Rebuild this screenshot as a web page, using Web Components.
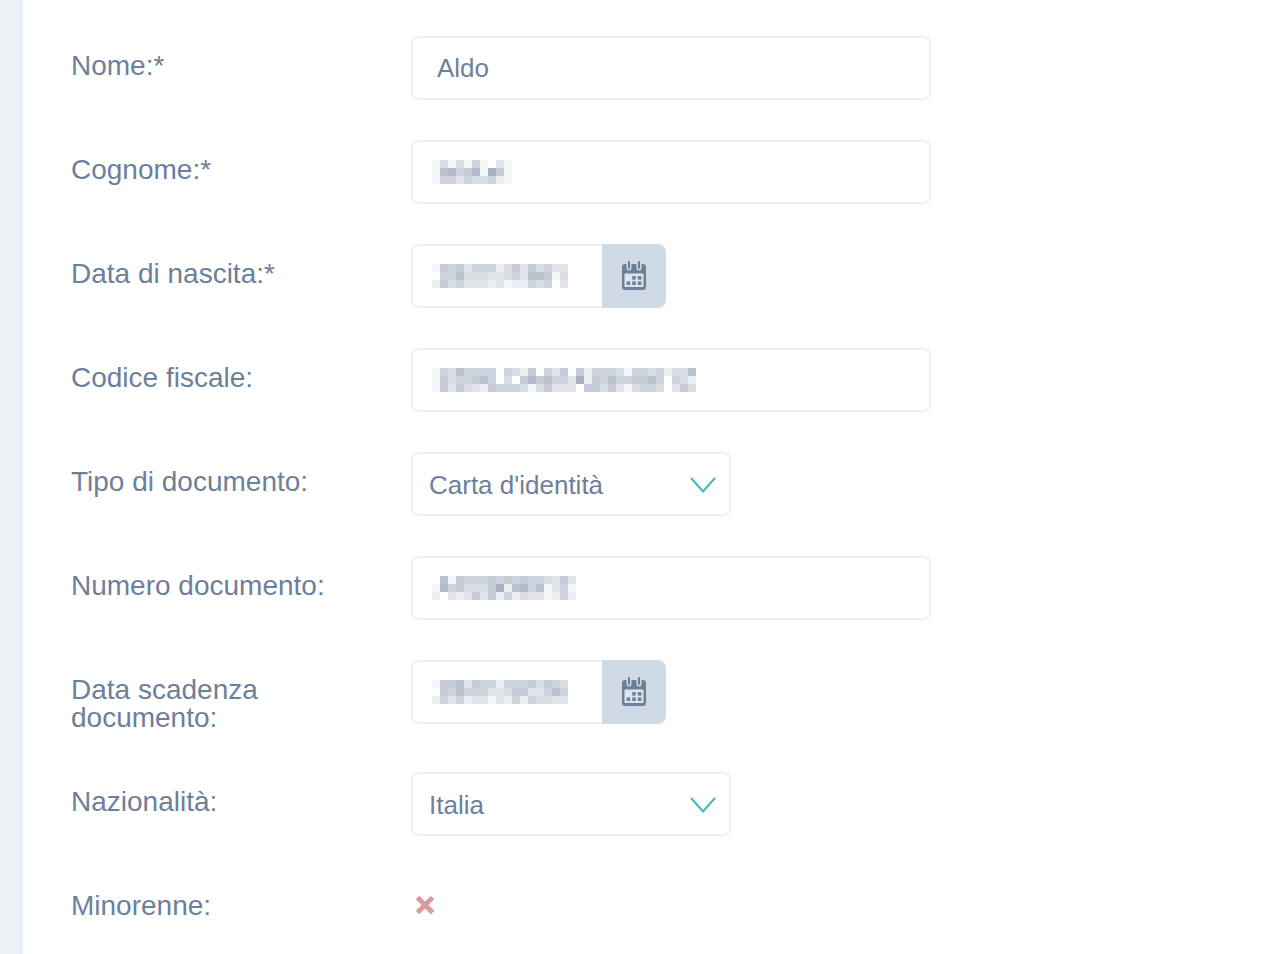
<!DOCTYPE html>
<html lang="it">
<head>
<meta charset="utf-8">
<title>Dati anagrafici</title>
<style>
  html, body { margin: 0; height: 100%; background: #fff; overflow: hidden; }
  body { font-family: "Liberation Sans", Arial, sans-serif; color: #6e7f99; }
</style>
</head>
<body>
<profile-page>
  <form-row label="Nome:*"><text-field>Aldo</text-field></form-row>
  <form-row label="Cognome:*">
    <text-field><blur-text cols="10" rows="1414151031,1785681961,1553544521"></blur-text></text-field>
  </form-row>
  <form-row label="Data di nascita:*">
    <date-field><blur-text cols="17" rows="16563555246364533,05574443345377614,26453332312254503"></blur-text></date-field>
  </form-row>
  <form-row label="Codice fiscale:">
    <text-field><blur-text cols="33" rows="154755550542605360625554155452447,164556750406867553926575566750542,163643265554146333066463145540364"></blur-text></text-field>
  </form-row>
  <form-row label="Tipo di documento:"><select-field>Carta d'identità</select-field></form-row>
  <form-row label="Numero documento:">
    <text-field><blur-text cols="18" rows="071655565656554363,185644469278571351,203236362524331252"></blur-text></text-field>
  </form-row>
  <form-row label="Data scadenza documento:">
    <date-field><blur-text cols="17" rows="16673655255564654,06575553346633575,25352331325254433"></blur-text></date-field>
  </form-row>
  <form-row label="Nazionalità:"><select-field>Italia</select-field></form-row>
  <form-row label="Minorenne:"><no-mark></no-mark></form-row>
</profile-page>

<script>
class ProfilePage extends HTMLElement {
  constructor() {
    super();
    this.attachShadow({ mode: "open" });
    this.shadowRoot.innerHTML = `
      <style>
        :host { display: flex; height: 100vh; }
        .strip { width: 18px; background: #edf2f7; border-right: 5px solid #ebf1f7; flex: none; }
        .content {
          flex: 1;
          padding: 36px 0 0 48px;
          display: flex;
          flex-direction: column;
          gap: 40px;
        }
      </style>
      <div class="strip"></div>
      <div class="content"><slot></slot></div>
    `;
  }
}

class FormRow extends HTMLElement {
  constructor() {
    super();
    this.attachShadow({ mode: "open" });
  }

  connectedCallback() {
    this.render();
  }

  render() {
    const label = this.getAttribute("label") || "";
    this.shadowRoot.innerHTML = `
      <style>
        :host { display: flex; align-items: flex-start; }
        .label {
          width: 300px;
          margin-right: 40px;
          padding-top: 16px;
          font-size: 28px;
          line-height: 28px;
          color: #6e7f99;
          flex: none;
        }
      </style>
      <div class="label">${label}</div>
      <slot></slot>
    `;
  }
}

// Shared box look for the three field types
const fieldStyles = `
  .box {
    box-sizing: border-box;
    height: 64px;
    background: #fff;
    border: 2px solid #e9f1f4;
    border-radius: 8px;
    display: flex;
    align-items: center;
    font-size: 26px;
    color: #6e7f99;
  }
`;

class TextField extends HTMLElement {
  constructor() {
    super();
    this.attachShadow({ mode: "open" });
    this.shadowRoot.innerHTML = `
      <style>
        :host { display: block; }
        ${fieldStyles}
        .box { width: 520px; padding-left: 24px; }
        ::slotted(blur-text) { margin-left: -5px; }
      </style>
      <div class="box"><slot></slot></div>
    `;
  }
}

class DateField extends HTMLElement {
  constructor() {
    super();
    this.attachShadow({ mode: "open" });
    this.shadowRoot.innerHTML = `
      <style>
        :host { display: flex; }
        ${fieldStyles}
        .box {
          width: 191px;
          padding-left: 19px;
          border-right: 0;
          border-radius: 8px 0 0 8px;
        }
        .addon {
          width: 64px;
          height: 64px;
          background: #cfdae5;
          border-radius: 0 8px 8px 0;
          display: flex;
          align-items: center;
          justify-content: center;
        }
        svg { display: block; }
      </style>
      <div class="box"><slot></slot></div>
      <div class="addon">
        <svg width="26" height="30" viewBox="0 0 26 30">
          <rect x="1" y="3" width="24" height="26" rx="3" fill="#6e7f99"/>
          <rect x="3.5" y="12.5" width="19" height="13.5" rx="1" fill="#dfe5ec"/>
          <rect x="5.5" y="0" width="5" height="9.5" rx="2.5" fill="#cfdae5"/>
          <rect x="15.5" y="0" width="5" height="9.5" rx="2.5" fill="#cfdae5"/>
          <rect x="7" y="0" width="2" height="8" rx="1" fill="#6e7f99"/>
          <rect x="17" y="0" width="2" height="8" rx="1" fill="#6e7f99"/>
          <g fill="#6e7f99">
            <rect x="11.2" y="15" width="3.6" height="3.6"/>
            <rect x="16.8" y="15" width="3.6" height="3.6"/>
            <rect x="5.6" y="20.4" width="3.6" height="3.6"/>
            <rect x="11.2" y="20.4" width="3.6" height="3.6"/>
            <rect x="16.8" y="20.4" width="3.6" height="3.6"/>
          </g>
        </svg>
      </div>
    `;
  }
}

class SelectField extends HTMLElement {
  constructor() {
    super();
    this.attachShadow({ mode: "open" });
    this.shadowRoot.innerHTML = `
      <style>
        :host { display: block; }
        ${fieldStyles}
        .box {
          width: 320px;
          padding: 0 13px 0 16px;
          justify-content: space-between;
        }
        span { margin-top: 2px; }
        svg { display: block; margin-top: 2px; }
      </style>
      <div class="box">
        <span><slot></slot></span>
        <svg width="26" height="16" viewBox="0 0 26 16">
          <polyline points="1,1 13,14.5 25,1" fill="none" stroke="#3fb8bd" stroke-width="2"/>
        </svg>
      </div>
    `;
  }
}

// Pixelated stand-in for redacted values: one digit per cell, 0 = white, 9 = darkest
class BlurText extends HTMLElement {
  constructor() {
    super();
    this.attachShadow({ mode: "open" });
  }

  connectedCallback() {
    const cols = this.getAttribute("cols");
    const cells = (this.getAttribute("rows") || "").replace(/,/g, "").split("");
    const html = cells.map((c) => {
      const t = Number(c) / 9;
      const r = Math.round(255 - 88 * t);
      const g = Math.round(255 - 78 * t);
      const b = Math.round(255 - 62 * t);
      return `<i style="background:rgb(${r},${g},${b})"></i>`;
    }).join("");
    this.shadowRoot.innerHTML = `
      <style>
        :host { display: block; flex: none; }
        .grid { display: grid; grid-template-columns: repeat(${cols}, 8px); grid-auto-rows: 8px; }
        i { display: block; }
      </style>
      <div class="grid">${html}</div>
    `;
  }
}

class NoMark extends HTMLElement {
  constructor() {
    super();
    this.attachShadow({ mode: "open" });
    this.shadowRoot.innerHTML = `
      <style>
        :host { display: block; padding: 19px 0 0 4px; }
        svg { display: block; }
      </style>
      <svg width="20" height="20" viewBox="0 0 20 20">
        <path d="M2.5 2.5 L17.5 17.5 M17.5 2.5 L2.5 17.5" stroke="#d79b9d" stroke-width="5" fill="none"/>
      </svg>
    `;
  }
}

customElements.define("profile-page", ProfilePage);
customElements.define("form-row", FormRow);
customElements.define("text-field", TextField);
customElements.define("date-field", DateField);
customElements.define("select-field", SelectField);
customElements.define("blur-text", BlurText);
customElements.define("no-mark", NoMark);
</script>
</body>
</html>
